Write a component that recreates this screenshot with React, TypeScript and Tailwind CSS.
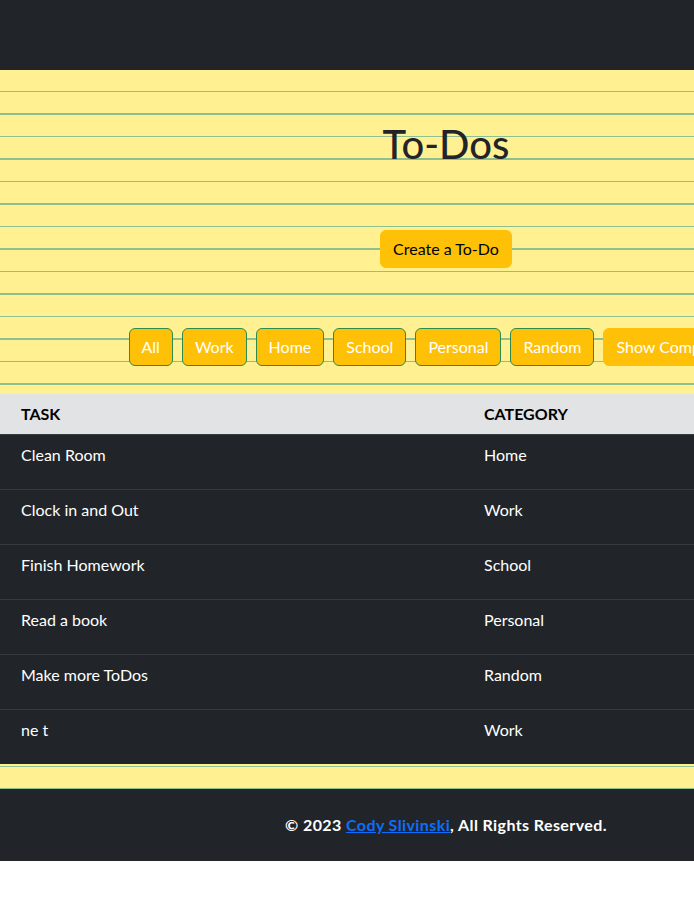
import React from "react";

const filters = ["All", "Work", "Home", "School", "Personal", "Random"];
const rows: [string, string][] = [
  ["Clean Room", "Home"],
  ["Clock in and Out", "Work"],
  ["Finish Homework", "School"],
  ["Read a book", "Personal"],
  ["Make more ToDos", "Random"],
  ["ne t", "Work"],
];

export default function App() {
  return (
    <div
      className="w-[892px] bg-white text-[16px] leading-6"
      style={{ fontFamily: "Lato, 'Noto Sans', sans-serif" }}
    >
      <header className="h-[70px] bg-[#212529]" />
      <main className="bg-[#fff192] [background-image:repeating-linear-gradient(to_bottom,transparent_0px,transparent_21px,#8fbf8f_21px,#8fbf8f_22.5px)]">
        <div className="flex flex-col items-center pt-[50px]">
          <h1 className="h-[48px] text-[40px] leading-[48px] font-medium text-[#212529]">To-Dos</h1>
          <button className="mt-[62px] h-[38px] rounded-[6px] border border-[#ffc107] bg-[#ffc107] px-3 text-black">
            Create a To-Do
          </button>
          <div className="mt-[60px] flex gap-[9px]">
            {filters.map((f) => (
              <button
                key={f}
                className="h-[38px] rounded-[6px] border border-[#2e8b4f] bg-[#ffc107] px-3 text-white"
              >
                {f}
              </button>
            ))}
            <button className="h-[38px] w-[160px] rounded-[6px] border border-[#ffc107] bg-[#ffc107] px-3 text-left text-white">
              Show Completed
            </button>
          </div>
        </div>
        <div className="mt-[28px]">
          <div className="grid h-[40px] grid-cols-[463px_1fr] bg-[#e2e3e5] font-bold uppercase text-black">
            <div className="pl-[21px] pt-[8px]">Task</div>
            <div className="pl-[21px] pt-[8px]">Category</div>
          </div>
          {rows.map(([t, c], i) => (
            <div
              key={i}
              className="grid h-[55px] grid-cols-[463px_1fr] border-t border-[#373b3e] bg-[#212529] text-white"
            >
              <div className="pl-[21px] pt-[8px]">{t}</div>
              <div className="pl-[21px] pt-[8px]">{c}</div>
            </div>
          ))}
        </div>
        <div className="h-[25px]" />
      </main>
      <footer className="flex h-[72px] items-center justify-center bg-[#212529] font-bold tracking-[0.4px] text-white">
        <span>
          © 2023{" "}
          <a href="#" className="text-[#0d6efd] underline">
            Cody Slivinski
          </a>
          , All Rights Reserved.
        </span>
      </footer>
    </div>
  );
}
